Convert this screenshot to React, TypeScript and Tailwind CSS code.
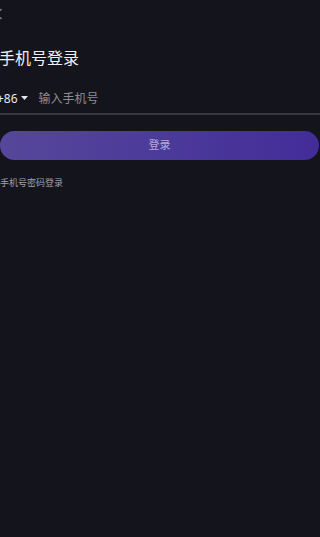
import * as React from "react";

const font = { fontFamily: '"Noto Sans", "Noto Sans CJK SC", sans-serif' };

function BackIcon() {
  return (
    <svg width="12" height="12" viewBox="0 0 12 12" fill="none" className="-ml-[7px]">
      <path d="M8 1.5 L3 6 L8 10.5" stroke="#8a8a92" strokeWidth="1.4" strokeLinecap="round" strokeLinejoin="round" />
    </svg>
  );
}

export default function App() {
  return (
    <div className="h-[537px] w-full overflow-hidden bg-[#14141c]" style={font}>
      <div className="flex h-[28px] items-center">
        <BackIcon />
      </div>
      <h1 className="mt-[19px] text-[16px] leading-[22px] text-[#f0f0f4] -ml-px">手机号登录</h1>
      <div className="mt-[18px] flex h-[24px] items-center border-b-2 border-[#38383e] pb-[2px] box-content">
        <div className="-ml-[3px] flex items-center text-[12px] text-[#e4e4ea]">
          <span>+86</span>
          <svg width="7" height="5" viewBox="0 0 7 5" className="ml-[3px] mb-[2px]">
            <path d="M0 0 H7 L3.5 4 Z" fill="#e4e4ea" />
          </svg>
        </div>
        <span className="ml-[11px] text-[12px] text-[#8c8c94]">输入手机号</span>
      </div>
      <button className="mt-[16px] flex h-[29px] w-[319px] items-center justify-center rounded-full bg-gradient-to-r from-[#56479a] to-[#432c99] text-[11px] text-[#b6a9de]">
        登录
      </button>
      <p className="mt-[16px] text-[9px] leading-[14px] text-[#a0a0a8]">手机号密码登录</p>
    </div>
  );
}
